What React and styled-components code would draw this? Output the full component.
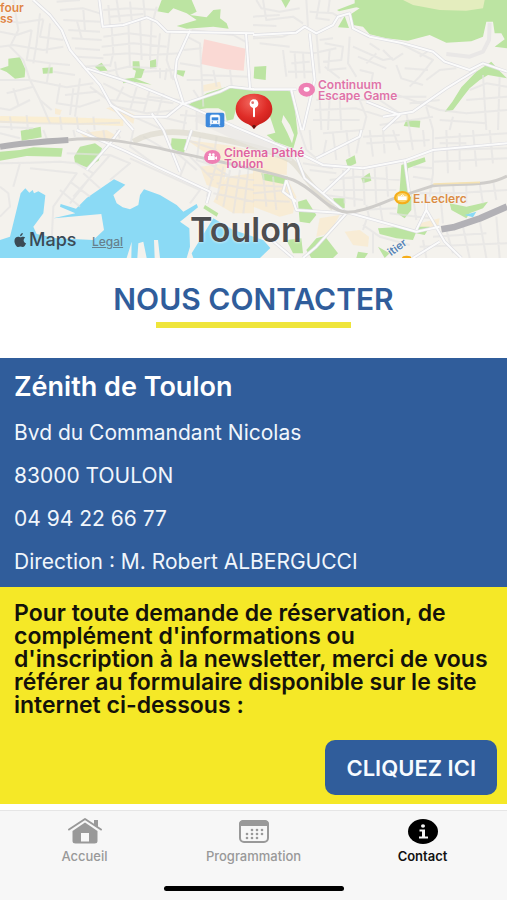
import React from "react";
import styled, { createGlobalStyle, css } from "styled-components";

const MAP_W = 507;
const MAP_H = 258;
const BLUE = "#305d9b";
const YELLOW = "#f5e827";

const GlobalStyle = createGlobalStyle`
  *, *::before, *::after { box-sizing: border-box; }
  html, body, #root { height: 100%; }
  body {
    margin: 0;
    background: #fff;
    font-family: Inter, "Liberation Sans", sans-serif;
  }
`;

const Screen = styled.div`
  display: flex;
  flex-direction: column;
  min-height: 100%;
`;

const Content = styled.main`
  flex: 1;
`;

const MapArea = styled.section`
  position: relative;
  width: 100%;
  aspect-ratio: ${MAP_W} / ${MAP_H};
  overflow: hidden;
`;

const MapDrawing = styled.svg`
  display: block;
  width: 100%;
  height: 100%;
`;

const onMap = css`
  position: absolute;
  left: ${({ $x }) => ($x / MAP_W) * 100}%;
  top: ${({ $y }) => ($y / MAP_H) * 100}%;
  white-space: nowrap;
`;

const PlaceLabel = styled.span`
  ${onMap}
  color: ${({ $color }) => $color};
  font-size: 12px;
  line-height: 11px;
  font-weight: 600;
  white-space: pre;
  text-shadow: 0 0 2px #fff;
`;

const CityLabel = styled.span`
  ${onMap}
  color: #4d4d4f;
  font-size: 34px;
  line-height: 36px;
  font-weight: 600;
  text-shadow: 0 0 3px #fff;
`;

const StreetLabel = styled.span`
  ${onMap}
  color: #5684b5;
  font-size: 11px;
  line-height: 11px;
  font-weight: 600;
  transform: rotate(-36deg);
  text-shadow: 0 0 2px #fff;
`;

const MapsBrand = styled.div`
  ${onMap}
  display: flex;
  align-items: center;
  gap: 2px;
  color: #3b4a55;
  font-size: 18px;
  line-height: 20px;
  font-weight: 500;
`;

const LegalLink = styled.a`
  ${onMap}
  color: #66808d;
  font-size: 12px;
  line-height: 12px;
  font-weight: 500;
  text-decoration: underline;
`;

const TitleBlock = styled.header`
  display: flex;
  flex-direction: column;
  align-items: center;
  gap: 6px;
  padding: 24px 16px 30px;
  background: #fff;
`;

const Title = styled.h1`
  margin: 0;
  color: ${BLUE};
  font-size: 30px;
  line-height: 34px;
  font-weight: 600;
`;

const TitleRule = styled.div`
  width: 195px;
  height: 6px;
  background: #efe53b;
`;

const AddressBlock = styled.address`
  display: flex;
  flex-direction: column;
  gap: 17px;
  padding: 13px 14px 12px;
  background: ${BLUE};
  color: #f1f6fc;
  font-style: normal;
`;

const VenueName = styled.h2`
  margin: 0;
  color: #fff;
  font-size: 27px;
  line-height: 32px;
  font-weight: 600;
`;

const AddressLine = styled.p`
  margin: 0;
  font-size: 21px;
  line-height: 26px;
`;

const RequestBlock = styled.section`
  display: flex;
  flex-direction: column;
  gap: 23px;
  padding: 15px 10px 9px 14px;
  background: ${YELLOW};
`;

const RequestText = styled.p`
  margin: 0;
  color: #14120a;
  font-size: 23px;
  line-height: 23px;
  font-weight: 600;
`;

const ActionButton = styled.button`
  align-self: flex-end;
  height: 55px;
  padding: 0 21px;
  border: 0;
  border-radius: 10px;
  background: ${BLUE};
  color: #f7fbff;
  font: inherit;
  font-size: 22px;
  font-weight: 600;
  cursor: pointer;
`;

const BottomBar = styled.footer`
  display: flex;
  flex-direction: column;
  align-items: center;
  background: #f7f7f7;
  border-top: 1px solid #e6e6e6;
`;

const Tabs = styled.nav`
  display: grid;
  grid-template-columns: repeat(3, 1fr);
  width: 100%;
  padding-top: 6px;
`;

const Tab = styled.button`
  display: flex;
  flex-direction: column;
  align-items: center;
  gap: 3px;
  height: 69px;
  padding: 0;
  border: 0;
  background: none;
  color: ${({ $active }) => ($active ? "#111" : "#999")};
  font: inherit;
  font-size: 13px;
  line-height: 16px;
  font-weight: ${({ $active }) => ($active ? 600 : 500)};
  cursor: pointer;
`;

const TabIcon = styled.svg`
  display: block;
  width: 36px;
  height: 28px;
`;

const HomeIndicator = styled.div`
  width: 180px;
  height: 5px;
  margin-bottom: 9px;
  border-radius: 3px;
  background: #000;
`;

/* Streets and areas are written per map tile, three units to a pixel. */
const TILES = [
  {
    x: 0,
    y: 0,
    sand: ["M610 255L660 245 665 265 610 275Z", "M318 325L350 318 405 345 400 372 365 345Z", "M165 325L185 330 180 345 165 342Z"],
    pink: ["M612 118L737 146 731 212 680 208 603 192Z"],
    green: [
      "M485 0L575 0 590 35 570 45 620 52 640 30 662 28 660 55 680 70 686 86 640 80 560 86 530 78 570 66 590 60 560 40 520 25 505 40 472 34Z",
      "M0 206L25 198 25 176 60 172 76 208 74 232 45 236 20 216 0 208Z",
      "M127 204L158 202 158 220 129 221Z", "M284 200L305 188 323 212 300 213Z",
      "M398 184L418 184 420 205 434 208 424 234 402 236 408 212 398 208Z", "M450 182L468 178 470 200 450 206Z",
      "M366 238L400 233 455 254 400 245 370 250Z", "M530 210L556 212 550 230 530 222Z",
      "M560 318L620 280 690 257 760 266 872 274 885 330 893 400 880 445 825 425 800 405 826 398 800 320 715 300 700 358 680 362 675 335 655 325 620 325 600 328Z",
      "M62 392L122 380 125 412 65 422Z"
    ],
    minor: [
      "M0 60L60 68 130 58M0 95L50 105 95 90M40 0L55 90 30 140 70 180 90 240M0 140L40 135 130 150 190 140M95 90L80 180 150 190 210 195M120 40L110 130 100 190M130 58L120 110 190 120M150 70L140 160M0 240L90 240 120 300 155 330M90 300L30 330 0 325M40 265L55 315M20 280L100 260M150 190L140 250 90 240M140 250L200 262 280 250M160 215L225 225M180 250L170 310 240 320 300 300M195 285L290 275M220 265L210 345M120 300L150 370M240 235L225 350",
      "M180 30L250 25 300 40M170 5L240 0M190 60L300 65M205 90L300 95M215 115L305 120M225 145L300 150M230 170L310 175M245 200L330 195M250 30L255 90M230 60L245 115M310 110L385 100 470 110M305 140L400 130 500 140M310 165L390 160 450 165 540 160M335 80L340 160 330 200M385 65L390 200M420 60L425 180M455 55L450 180M480 100L470 200M510 95L500 180 520 240M345 185L350 220 360 240M320 215L385 200 470 205M430 215L525 210M500 205L495 240M480 205L480 235M510 205L515 235",
      "M325 15L330 75M350 0L360 65M390 5L395 60M430 0L435 50M310 30L390 25 475 30M330 50L430 42M470 20L460 60M560 110L600 130 605 230 610 320M575 90L700 105 745 130M550 150L605 145M540 190L605 200M605 225L745 230M640 210L650 260M690 210L695 255M560 240L640 240M580 270L600 300M270 260L350 320 440 340 530 330M310 250L390 290 520 310M370 260L350 300M410 262L390 330M450 268L430 340M490 280L470 350M330 300L440 310M440 290L540 300M400 350L480 385M460 345L560 370M0 365L110 370 240 372 360 368M0 380L100 385M30 350L35 390M80 345L84 390M180 350L185 390M230 350L235 390M280 350L284 390M540 345L620 350M560 330L550 390M590 325L590 390"
    ],
    major: [
      "M100 0L150 45 185 90 210 150 260 210 300 255 330 310 400 390", "M298 0L308 80 370 75 440 52 470 65 500 95 762 100", "M570 92L530 180 525 230 550 310 500 350 400 350 330 315", "M738 100L750 265", "M260 205L400 250 560 316 700 378M550 312L660 275 690 260 762 268"
    ]
  },
  {
    x: 759,
    y: 0,
    green: [
      "M305 0L762 0 762 145 725 140 755 118 745 100 725 100 720 65 700 65 690 110 655 124 580 128 530 105 465 122 400 115 350 103 330 80 300 75 290 45 320 25 305 20Z",
      "M255 82L275 48 288 84Z", "M85 0L112 0 98 24Z", "M252 30L305 10 310 22 258 34Z", "M4 200L40 198 38 240 2 235Z",
      "M670 215L715 185 742 215 762 235 705 225 680 240 650 265 630 290 600 330 575 335 598 305 625 262Z", "M460 360L502 362 500 383 452 378Z"
    ],
    meadow: ["M450 0L695 0 690 25 640 32 560 30 480 15Z"],
    minor: [
      "M10 0L25 25 80 35 140 25M30 0L40 60 120 50 150 70M0 50L80 45M160 0L165 80M200 0L190 55 230 60M230 0L225 40M170 35L240 40 265 55M0 75L70 78M0 115L90 110 150 85M20 130L110 140M90 150L100 230M110 155L180 160 250 145M115 190L170 185M105 215L180 215M125 160L130 235M150 160L155 235M190 95L200 220M215 130L270 140 265 180 210 185M230 150L225 210 280 205M200 120L240 115M215 200L260 235M290 110L285 190 310 230M300 140L390 180 420 175M315 170L400 205M340 190L370 160M320 210L360 220 350 270M390 150L420 180 450 160M350 130L380 150M430 195L445 235 510 255M440 130L540 180 500 230 470 260M500 170L530 150M455 205L525 210M520 240L560 210 610 205",
      "M190 300L260 290 320 300 390 295M185 330L310 325 390 350M200 290L205 390M230 290L225 390M260 290L265 390M320 300L340 350 330 390M180 360L320 360M380 300L440 340M390 290L520 290M420 280L560 330M470 310L560 300M380 375L540 350M520 320L540 390M460 340L470 390M560 330L640 340 762 330M600 350L590 390M650 270L700 250 762 260M640 300L762 290M690 225L700 390M740 230L735 390M560 360L700 370"
    ],
    major: [
      "M0 105L130 98 155 80 190 100 240 75 255 50 290 40 300 85 350 110 450 130 540 155 575 185 650 210 690 190 762 215", "M0 268L130 268M115 270L145 390M170 100L185 240 150 390", "M390 350L480 335 580 265 670 210M340 305L440 345 390 390"
    ],
    lane: ["M710 68L708 120 690 155 650 170 580 162"]
  },
  {
    x: 0,
    y: 390,
    sand: ["M680 140L762 130 762 250 700 250 640 215Z", "M560 30L700 48 862 90 860 135 780 125 640 85Z", "M600 110L680 100 670 180 620 165Z", "M240 10L320 0 345 15 320 35 260 30Z"],
    green: ["M0 65L60 60 100 52 188 55 184 80 80 78 0 92Z", "M222 80L240 50 285 40 306 55 296 92 260 112 225 98Z", "M515 25L560 28 552 70 512 55Z", "M615 225L655 250 650 260 610 235Z"],
    water: [
      "M62 190L76 175 88 188 98 180 102 190 115 184 136 196 130 250 100 290 110 312 170 325 280 330 312 300 304 252 195 262 160 265 226 250 180 230 182 222 228 236 260 204 342 148 376 164 340 195 350 220 368 232 390 238 415 225 420 195 432 178 480 195 530 225 550 245 590 222 594 232 540 275 568 295 570 350 560 384 480 384 474 330 462 330 464 384 440 384 430 335 415 340 412 384 394 384 395 335 380 384 0 384 0 330 30 320Z",
      "M575 370L640 265 700 300 790 330 811 354 780 384 580 384Z"
    ],
    minor: [
      "M0 100L90 98 180 95 230 100M0 170L25 190 30 230 0 260M60 100L40 170M90 115L230 130 160 230 155 330M200 70L330 75 220 200M230 100L280 130 210 220M330 75L390 100 330 150M180 180L240 230M210 155L270 200M250 130L300 175M390 85L600 180 570 220M400 0L390 50 460 100M430 20L500 60 550 70M560 30L650 60M600 20L590 90 650 110M650 20L640 90M560 90L540 140M520 60L590 120M570 80L640 150M610 90L690 140M650 100L620 200M670 110L650 210M690 120L670 230M720 120L700 250M745 120L730 250M650 160L762 180M640 190L762 215M620 130L762 150M0 10L60 25M130 0L140 25M220 0L225 20M260 0L280 20M310 0L315 30M350 0L360 25"
    ],
    major: [
      "M230 0L380 65 480 115 630 185 620 220", "M455 -50L490 0 540 125M575 0L555 60", "M360 0L330 40 260 120"
    ]
  },
  {
    x: 759,
    y: 390,
    sand: ["M0 100L100 140 130 200 120 250 80 260 0 230Z", "M200 265L260 255 230 310 190 320Z", "M275 305L320 300 348 320 345 350 300 345Z", "M500 280L560 265 555 290 500 295Z"],
    green: ["M278 90L305 76 310 100 285 112Z", "M325 145L350 128 355 152 330 160Z", "M445 105L515 82 518 95 465 115 465 180 475 195 475 240 455 265 432 250 440 180Z", "M25 130L105 140 95 163 30 150Z", "M135 215L160 208 190 255 170 280 140 275Z", "M240 205L275 205 275 235 250 230Z", "M375 295L450 290 490 305 480 330 430 325 380 312Z", "M590 220L640 230 705 215 690 235 650 250 640 265 595 240Z", "M190 325L215 318 255 370 240 384 175 384 160 360Z", "M100 330L145 325 150 370 120 370Z", "M490 290L530 290 515 315 490 310Z", "M315 365L345 370 335 384 310 384Z", "M375 350L410 370 395 384Z"],
    water: ["M635 255L670 245 660 262Z"],
    minor: [
      "M140 0L160 60 190 85M170 0L175 60M210 10L330 0M220 30L210 80M240 10L250 90M280 0L290 80M320 20L310 70M330 20L440 15M350 0L360 80M390 0L395 70M420 0L440 60M340 40L530 30M470 0L480 60M510 0L515 50M540 0L540 130 530 200M580 0L585 130M620 10L620 120M660 0L670 110M710 0L720 100M545 25L762 10M545 60L762 55M540 95L762 85M560 40L640 40M150 100L240 115M170 120L250 130M230 150L310 140 440 150M240 180L430 180M270 120L275 220M300 115L305 230M330 110L335 225M365 115L370 220M400 110L405 200M215 195L330 210M310 240L430 235M340 225L350 270M380 220L390 280M410 250L530 265M480 200L490 270M500 190L600 190 762 180M560 170L570 280M600 160L605 220M640 160L640 220M680 160L690 220M720 150L730 210M480 140L540 150M480 110L540 115M330 285L380 320 470 345M340 270L330 300M360 310L360 370M580 300L600 370M540 320L700 310M630 290L650 384M680 270L700 384M730 260L740 384M500 350L762 340M520 384L510 330",
      "M0 190L100 180M0 165L90 170M30 130L40 230M60 140L70 240M0 210L110 215"
    ],
    major: [
      "M-60 -12L100 55 150 75 210 105 330 115 460 90 540 60 762 40", "M130 80L155 145 215 195 275 245 490 305 560 290", "M455 90L470 200M520 200L520 240 490 300M520 240L575 335 625 384", "M100 150L130 240 280 250M100 150L90 185 130 215M280 250L190 350 150 384M560 335L480 384M50 325L120 384M190 85L320 20 325 0M210 190L290 115"
    ]
  }
];

const many = (list, props) => (list || []).map((d, i) => <path key={i} d={d} {...props} />);

const RAILWAY = "M200 420C300 408 370 425 480 445C600 475 780 505 880 540C950 570 970 625 1040 637C1100 635 1150 605 1190 593L1300 557C1390 550 1460 560 1521 528";

function MapTiles() {
  const shift = (t) => `translate(${t.x} ${t.y})`;
  return (
    <MapDrawing viewBox="0 0 1521 774" preserveAspectRatio="none" aria-hidden="true">
      <rect width="1521" height="774" fill="#f4f2ed" />
      {TILES.map((t) => (
        <g key={`area-${t.x}-${t.y}`} transform={shift(t)}>
          {many(t.sand, { fill: "#fae9cb", opacity: 0.7 })}
          {many(t.pink, { fill: "#fad9d4" })}
          {many(t.green, { fill: "#bce4a2" })}
          {many(t.meadow, { fill: "#e4edbe" })}
          {many(t.water, { fill: "#8bdaf5" })}
        </g>
      ))}
      <path d="M850 345L870 375 882 405 876 430 862 398 845 365Z" fill="#f4f2ed" />
      <g fill="none" strokeLinejoin="round">
        <path d="M0 358L200 362 370 368" stroke="#fbeccb" strokeWidth="20" opacity=".8" />
        {TILES.map((t) => (
          <g key={`minor-${t.x}-${t.y}`} transform={shift(t)}>
            {many(t.minor, { stroke: "#e3e2e2", strokeWidth: 6, opacity: 0.65 })}
          </g>
        ))}
        <path d="M400 425C450 395 520 390 600 405S790 440 870 480C900 500 920 550 1000 625" stroke="#d9d6c8" strokeWidth="17" opacity=".6" />
        <path d="M590 350L720 410 880 470" stroke="#e9e8e6" strokeWidth="30" opacity=".7" />
        {TILES.map((t) => (
          <g key={`edge-${t.x}-${t.y}`} transform={shift(t)}>
            {many(t.major, { stroke: "#dedee2", strokeWidth: 10 })}
          </g>
        ))}
        {TILES.map((t) => (
          <g key={`major-${t.x}-${t.y}`} transform={shift(t)}>
            {many(t.major, { stroke: "#fbfbfb", strokeWidth: 6 })}
            {many(t.lane, { stroke: "#e9e7e6", strokeWidth: 12 })}
          </g>
        ))}
        <path d={RAILWAY} stroke="#cfcdca" strokeWidth="9" />
        <path d="M0 440C60 430 120 425 205 420" stroke="#b2b1b4" strokeWidth="18" />
        <path d="M1324 688L1360 682 1440 655 1521 620" stroke="#b2b1b6" strokeWidth="20" />
        <path d="M1300 552L1440 547" stroke="#f5e2b2" strokeWidth="5" />
      </g>

      <rect x="617" y="338" width="56" height="44" rx="6" fill="#3d89dc" />
      <path d="M636 345h18q5 0 5 5v21h-28v-21q0-5 5-5zM634 371l-4 7M656 371l4 7" fill="#fff" stroke="#fff" strokeWidth="2" />
      <path d="M635 352h20v9h-20z" fill="#3d89dc" />
      <circle cx="637" cy="366" r="2" fill="#3d89dc" />
      <circle cx="653" cy="366" r="2" fill="#3d89dc" />

      <ellipse cx="920" cy="269" rx="25" ry="21" fill="#ee80b4" />
      <ellipse cx="920" cy="268" rx="9" ry="7" fill="#fff" />
      <ellipse cx="637" cy="471" rx="25" ry="21" fill="#ee80b4" />
      <path d="M624 468h20v12h-20zM644 473l7-4v10l-7-4z" fill="#fff" />
      <circle cx="630" cy="464" r="4" fill="#fff" />
      <circle cx="640" cy="464" r="4" fill="#fff" />
      <ellipse cx="1207" cy="593" rx="25" ry="20" fill="#f5ad19" />
      <ellipse cx="1207" cy="593" rx="18" ry="14" fill="#fbd163" />
      <path d="M1194 589h26v11h-26z" fill="#fff" />
      <path d="M1201 589q6-9 12 0" fill="none" stroke="#fff" strokeWidth="3" />
      <ellipse cx="1220" cy="774" rx="14" ry="7" fill="#f5ad19" />

      <defs>
        <radialGradient id="pin" cx=".42" cy=".25" r=".8">
          <stop offset="0" stopColor="#f2655c" />
          <stop offset=".55" stopColor="#df2c27" />
          <stop offset="1" stopColor="#bf1916" />
        </radialGradient>
      </defs>
      <path d="M762 281C796 281 817 301 817 327C817 352 798 365 779 373Q768 378 762 387Q756 378 745 373C726 365 707 352 707 327C707 301 728 281 762 281Z" fill="url(#pin)" />
      <path d="M756 378L762 387 768 378 762 374Z" fill="#5d1512" />
      <circle cx="762" cy="311" r="13" fill="#fff" />
      <circle cx="758" cy="308" r="4" fill="#df726b" />
      <path d="M762 320L762 349" stroke="#fff" strokeWidth="6" strokeLinecap="round" />
    </MapDrawing>
  );
}

const AppleMark = styled.svg`
  width: 13px;
  height: 14px;
`;

const PLACES = [
  { x: 0, y: 2, color: "#df8646", text: "four\nss" },
  { x: 318, y: 79, color: "#df74a8", text: "Continuum\nEscape Game" },
  { x: 224, y: 147, color: "#df64a0", text: "Cinéma Pathé\nToulon" },
  { x: 413, y: 193, color: "#da8d45", text: "E.Leclerc" }
];

function HomeIcon() {
  return (
    <TabIcon viewBox="0 0 36 28" fill="none" aria-hidden="true">
      <path d="M2 12.500L18 2l16 10.500" stroke="currentColor" strokeWidth="2" strokeLinecap="round" strokeLinejoin="round" />
      <path d="M27 3h4v8l-4-3z" fill="currentColor" />
      <path d="M5.500 14L18 5.500l12.500 8.500V24q0 2.500-3 2.500h-19q-3 0-3-2.500z" fill="currentColor" />
      <path d="M14 16h8v8.500h-8z" fill="#f7f7f7" />
    </TabIcon>
  );
}

function CalendarIcon() {
  const dots = [[16, 13], [21, 13], [26, 13], [11, 17], [16, 17], [21, 17], [26, 17], [11, 21], [16, 21], [21, 21]];
  return (
    <TabIcon viewBox="0 0 36 28" fill="none" aria-hidden="true">
      <rect x="4" y="4" width="28" height="21" rx="4" stroke="currentColor" strokeWidth="2" />
      <path d="M3 9V7q0-4 5-4h20q5 0 5 4v2z" fill="currentColor" />
      {dots.map(([x, y]) => (
        <circle key={`${x}-${y}`} cx={x} cy={y} r="1.300" fill="currentColor" />
      ))}
    </TabIcon>
  );
}

function InfoIcon() {
  return (
    <TabIcon viewBox="0 0 36 28" aria-hidden="true">
      <ellipse cx="18" cy="14.500" rx="15" ry="12.500" fill="#000" />
      <ellipse cx="18" cy="9" rx="2" ry="1.800" fill="#f7f7f7" />
      <path d="M14.500 12.500h5.500v7h3v2h-9v-2h3v-5h-2.500z" fill="#f7f7f7" />
    </TabIcon>
  );
}

const TABS = [
  { label: "Accueil", Icon: HomeIcon },
  { label: "Programmation", Icon: CalendarIcon },
  { label: "Contact", Icon: InfoIcon, active: true }
];

const ADDRESS = ["Bvd du Commandant Nicolas", "83000 TOULON", "04 94 22 66 77", "Direction : M. Robert ALBERGUCCI"];

export default function App() {
  return (
    <Screen>
      <GlobalStyle />
      <Content>
        <MapArea aria-label="Toulon">
          <MapTiles />
          {PLACES.map((p) => (
            <PlaceLabel key={p.text} $x={p.x} $y={p.y} $color={p.color}>{p.text}</PlaceLabel>
          ))}
          <CityLabel $x={190} $y={212}>Toulon</CityLabel>
          <StreetLabel $x={387} $y={242}>itier</StreetLabel>
          <MapsBrand $x={14} $y={230}>
            <AppleMark viewBox="0 0 26 30" fill="currentColor" aria-hidden="true">
              <path d="M18 0c0 4-3 7-6 7 0-4 3-7 6-7zM23 10c-5 3-4 10 2 12-2 5-4 8-7 8-2 0-3-1-5-1s-3 1-5 1C4 30 0 22 0 17 0 11 4 8 8 8c2 0 4 1 5 1s3-1 5-1 4 1 5 2z" />
            </AppleMark>
            Maps
          </MapsBrand>
          <LegalLink href="#legal" $x={92} $y={236}>Legal</LegalLink>
        </MapArea>
        <TitleBlock>
          <Title>NOUS CONTACTER</Title>
          <TitleRule />
        </TitleBlock>
        <AddressBlock>
          <VenueName>Zénith de Toulon</VenueName>
          {ADDRESS.map((line) => (
            <AddressLine key={line}>{line}</AddressLine>
          ))}
        </AddressBlock>
        <RequestBlock>
          <RequestText>
            Pour toute demande de réservation, de complément d'informations ou d'inscription à la newsletter, merci de vous référer au formulaire disponible sur le site internet ci-dessous :
          </RequestText>
          <ActionButton type="button">CLIQUEZ ICI</ActionButton>
        </RequestBlock>
      </Content>
      <BottomBar>
        <Tabs>
          {TABS.map(({ label, Icon, active }) => (
            <Tab key={label} type="button" $active={active} aria-current={active ? "page" : undefined}>
              <Icon />
              {label}
            </Tab>
          ))}
        </Tabs>
        <HomeIndicator />
      </BottomBar>
    </Screen>
  );
}
